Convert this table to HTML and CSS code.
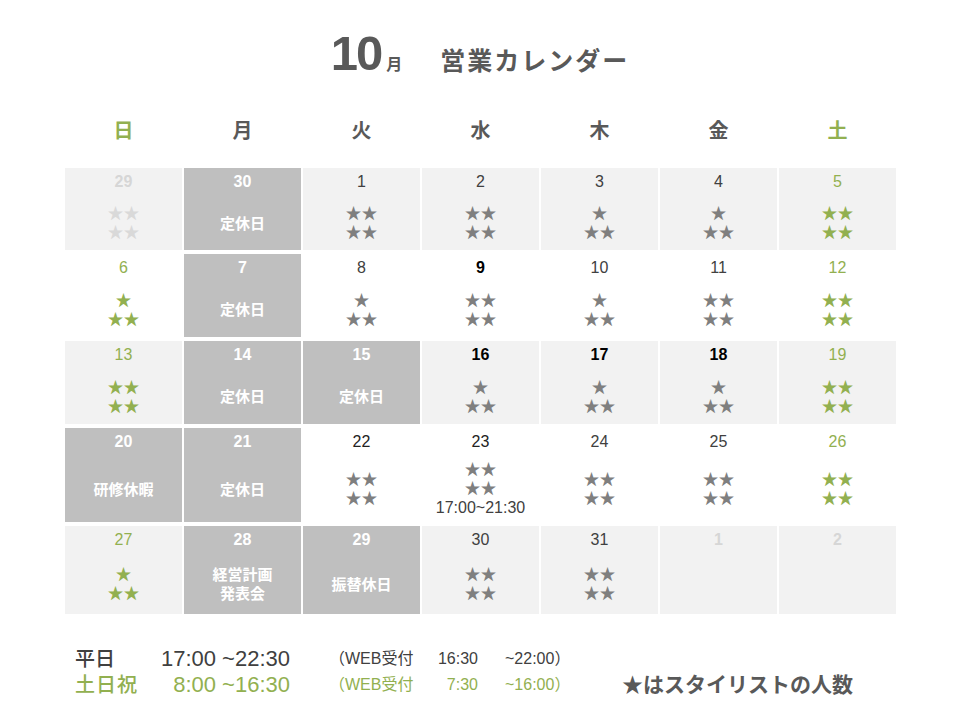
FILE: index.html
```html
<!DOCTYPE html>
<html lang="ja">
<head>
<meta charset="utf-8">
<title>10月 営業カレンダー</title>
<link rel="stylesheet" href="styles.css">
</head>
<body>
<div class="page">
  <h1 class="title"><span class="t-num">10</span><span class="t-mon">月</span><span class="t-name">営業カレンダー</span></h1>

  <div class="week">
    <div class="wd green">日</div><div class="wd">月</div><div class="wd">火</div><div class="wd">水</div><div class="wd">木</div><div class="wd">金</div><div class="wd green">土</div>
  </div>

  <div class="cal">
    <!-- row 1 -->
    <div class="cell light faded"><div class="d">29</div><div class="c"><span class="st">★★</span><span class="st">★★</span></div></div>
    <div class="cell off"><div class="d">30</div><div class="c"><span class="lbl">定休日</span></div></div>
    <div class="cell light"><div class="d">1</div><div class="c"><span class="st">★★</span><span class="st">★★</span></div></div>
    <div class="cell light"><div class="d">2</div><div class="c"><span class="st">★★</span><span class="st">★★</span></div></div>
    <div class="cell light"><div class="d">3</div><div class="c"><span class="st">★</span><span class="st">★★</span></div></div>
    <div class="cell light"><div class="d">4</div><div class="c"><span class="st">★</span><span class="st">★★</span></div></div>
    <div class="cell light green"><div class="d">5</div><div class="c"><span class="st">★★</span><span class="st">★★</span></div></div>
    <!-- row 2 -->
    <div class="cell green"><div class="d">6</div><div class="c"><span class="st">★</span><span class="st">★★</span></div></div>
    <div class="cell off"><div class="d">7</div><div class="c"><span class="lbl">定休日</span></div></div>
    <div class="cell"><div class="d">8</div><div class="c"><span class="st">★</span><span class="st">★★</span></div></div>
    <div class="cell dark"><div class="d">9</div><div class="c"><span class="st">★★</span><span class="st">★★</span></div></div>
    <div class="cell"><div class="d">10</div><div class="c"><span class="st">★</span><span class="st">★★</span></div></div>
    <div class="cell"><div class="d">11</div><div class="c"><span class="st">★★</span><span class="st">★★</span></div></div>
    <div class="cell green"><div class="d">12</div><div class="c"><span class="st">★★</span><span class="st">★★</span></div></div>
    <!-- row 3 -->
    <div class="cell light green"><div class="d">13</div><div class="c"><span class="st">★★</span><span class="st">★★</span></div></div>
    <div class="cell off"><div class="d">14</div><div class="c"><span class="lbl">定休日</span></div></div>
    <div class="cell off"><div class="d">15</div><div class="c"><span class="lbl">定休日</span></div></div>
    <div class="cell light dark"><div class="d">16</div><div class="c"><span class="st">★</span><span class="st">★★</span></div></div>
    <div class="cell light dark"><div class="d">17</div><div class="c"><span class="st">★</span><span class="st">★★</span></div></div>
    <div class="cell light dark"><div class="d">18</div><div class="c"><span class="st">★</span><span class="st">★★</span></div></div>
    <div class="cell light green"><div class="d">19</div><div class="c"><span class="st">★★</span><span class="st">★★</span></div></div>
    <!-- row 4 -->
    <div class="cell off"><div class="d">20</div><div class="c"><span class="lbl">研修休暇</span></div></div>
    <div class="cell off"><div class="d">21</div><div class="c"><span class="lbl">定休日</span></div></div>
    <div class="cell black"><div class="d">22</div><div class="c"><span class="st">★★</span><span class="st">★★</span></div></div>
    <div class="cell black"><div class="d">23</div><div class="c"><span class="st">★★</span><span class="st">★★</span><span class="tm">17:00~21:30</span></div></div>
    <div class="cell"><div class="d">24</div><div class="c"><span class="st">★★</span><span class="st">★★</span></div></div>
    <div class="cell"><div class="d">25</div><div class="c"><span class="st">★★</span><span class="st">★★</span></div></div>
    <div class="cell green"><div class="d">26</div><div class="c"><span class="st">★★</span><span class="st">★★</span></div></div>
    <!-- row 5 -->
    <div class="cell light green"><div class="d">27</div><div class="c"><span class="st">★</span><span class="st">★★</span></div></div>
    <div class="cell off"><div class="d">28</div><div class="c"><span class="lbl">経営計画</span><span class="lbl">発表会</span></div></div>
    <div class="cell off"><div class="d">29</div><div class="c"><span class="lbl">振替休日</span></div></div>
    <div class="cell light"><div class="d">30</div><div class="c"><span class="st">★★</span><span class="st">★★</span></div></div>
    <div class="cell light"><div class="d">31</div><div class="c"><span class="st">★★</span><span class="st">★★</span></div></div>
    <div class="cell light faded"><div class="d">1</div><div class="c"></div></div>
    <div class="cell light faded"><div class="d">2</div><div class="c"></div></div>
  </div>

  <div class="hours">
    <div class="h-lbl">平日</div>
    <div class="h-time">17:00 ~22:30</div>
    <div class="h-web">（WEB受付</div>
    <div class="h-wt">16:30</div>
    <div class="h-we">~22:00）</div>
    <div class="h-note"></div>

    <div class="h-lbl g wide">土日祝</div>
    <div class="h-time g">8:00 ~16:30</div>
    <div class="h-web g">（WEB受付</div>
    <div class="h-wt g">7:30</div>
    <div class="h-we g">~16:00）</div>
    <div class="h-note">★はスタイリストの人数</div>
  </div>
</div>
</body>
</html>
```

FILE: styles.css
```css
* { box-sizing: border-box; }

body {
  margin: 0;
  background: #ffffff;
  font-family: "Liberation Sans", "Noto Sans CJK JP", sans-serif;
  color: #404040;
}

.page {
  width: 960px;
  height: 720px;
  overflow: hidden;
}

/* ---------- title ---------- */
.title {
  margin: 0;
  padding-top: 25px;
  height: 81px;
  display: flex;
  justify-content: center;
  align-items: baseline;
  line-height: 56px;
  color: #595959;
  font-weight: bold;
}
.t-num {
  font-family: "Liberation Sans", sans-serif;
  font-size: 49px;
  letter-spacing: -2px;
}
.t-mon {
  font-family: "Noto Sans CJK JP", sans-serif;
  font-size: 16px;
  margin-left: 5px;
}
.t-name {
  font-family: "Noto Sans CJK JP", sans-serif;
  font-size: 25px;
  margin-left: 38px;
  letter-spacing: 2px;
}

/* ---------- week header ---------- */
.week {
  margin: 29px 0 18px 65px;
  width: 831px;
  display: grid;
  grid-template-columns: repeat(7, 1fr);
  column-gap: 2px;
  height: 40px;
}
.wd {
  font-family: "Noto Sans CJK JP", sans-serif;
  font-size: 20px;
  font-weight: bold;
  line-height: 40px;
  text-align: center;
  color: #595959;
}
.wd.green { color: #92b050; }

/* ---------- calendar grid ---------- */
.cal {
  margin-left: 65px;
  width: 831px;
  display: grid;
  grid-template-columns: repeat(7, 1fr);
  grid-template-rows: 82px 83px 83px 94px 88px;
  column-gap: 2px;
  row-gap: 4px;
}
.cell {
  display: flex;
  flex-direction: column;
  background: #ffffff;
  color: #404040;
}
.cell.light { background: #f2f2f2; }
.cell.off { background: #bfbfbf; color: #ffffff; }

.d {
  height: 28px;
  line-height: 27px;
  text-align: center;
  font-size: 16px;
  color: #404040;
}
.cell.off .d { font-weight: bold; color: #ffffff; }
.cell.dark .d { color: #000000; font-weight: bold; }
.cell.black .d { color: #222222; }
.cell.green .d { color: #92b050; }
.cell.faded .d { color: #d6d6d6; font-weight: bold; }

.c {
  flex: 1;
  display: flex;
  flex-direction: column;
  align-items: center;
  justify-content: center;
}

.st {
  font-family: "Liberation Sans", "Noto Sans CJK JP", sans-serif;
  font-size: 16px;
  line-height: 19px;
  height: 19px;
  color: #7f7f7f;
}
.cell.green .st { color: #92b050; }
.cell.faded .st { color: #d9d9d9; }

.lbl {
  font-family: "Liberation Sans", "Noto Sans CJK JP", sans-serif;
  font-size: 15px;
  font-weight: bold;
  line-height: 19px;
  height: 19px;
  color: #ffffff;
}

.tm {
  font-size: 16px;
  line-height: 20px;
  color: #404040;
}

/* ---------- hours legend ---------- */
.hours {
  margin: 32px 0 0 75px;
  display: grid;
  grid-template-columns: 85px 130px 122px 66px 144px auto;
  grid-auto-rows: 26px;
  align-items: center;
  color: #404040;
}
.h-lbl {
  font-family: "Liberation Sans", "Noto Sans CJK JP", sans-serif;
  font-size: 20px;
  font-weight: 500;
  line-height: 26px;
}
.h-lbl.wide { letter-spacing: 1px; }
.h-time {
  font-size: 22px;
  line-height: 26px;
  text-align: right;
}
.h-web {
  padding-left: 39px;
  font-size: 16px;
  line-height: 26px;
  white-space: nowrap;
}
.h-wt {
  font-size: 16px;
  line-height: 26px;
  text-align: right;
}
.h-we {
  padding-left: 27px;
  font-size: 16px;
  line-height: 26px;
  white-space: nowrap;
}
.h-note {
  font-family: "Liberation Sans", "Noto Sans CJK JP", sans-serif;
  font-size: 21px;
  font-weight: bold;
  line-height: 26px;
  color: #595959;
  white-space: nowrap;
}
.g { color: #92b050; }
```
